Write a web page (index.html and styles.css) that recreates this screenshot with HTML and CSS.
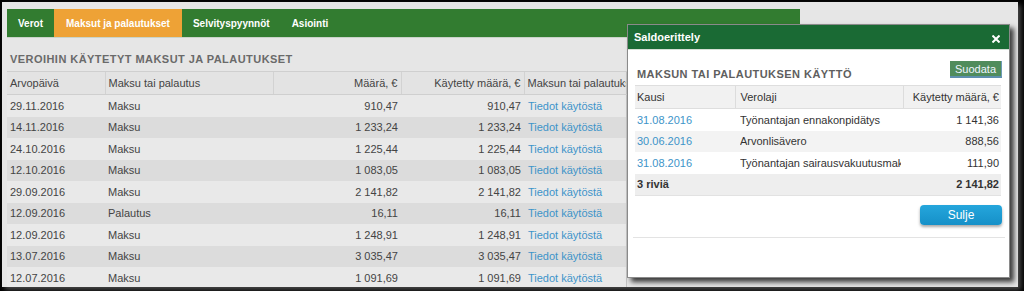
FILE: index.html
```html
<!DOCTYPE html>
<html lang="fi">
<head>
<meta charset="utf-8">
<link rel="stylesheet" href="styles.css">
</head>
<body>
<div class="window">
  <nav class="nav">
    <a class="tab">Verot</a>
    <a class="tab active">Maksut ja palautukset</a>
    <a class="tab">Selvityspyynnöt</a>
    <a class="tab">Asiointi</a>
  </nav>
  <h2 class="title">VEROIHIN KÄYTETYT MAKSUT JA PALAUTUKSET</h2>
  <table class="grid">
    <colgroup><col class="c1"><col class="c2"><col class="c3"><col class="c4"><col class="c5"></colgroup>
    <thead>
      <tr><th>Arvopäivä</th><th>Maksu tai palautus</th><th class="num">Määrä, €</th><th class="num">Käytetty määrä, €</th><th>Maksun tai palautuksen</th></tr>
    </thead>
    <tbody>
      <tr><td>29.11.2016</td><td>Maksu</td><td class="num">910,47</td><td class="num">910,47</td><td><a class="link">Tiedot käytöstä</a></td></tr>
      <tr><td>14.11.2016</td><td>Maksu</td><td class="num">1 233,24</td><td class="num">1 233,24</td><td><a class="link">Tiedot käytöstä</a></td></tr>
      <tr><td>24.10.2016</td><td>Maksu</td><td class="num">1 225,44</td><td class="num">1 225,44</td><td><a class="link">Tiedot käytöstä</a></td></tr>
      <tr><td>12.10.2016</td><td>Maksu</td><td class="num">1 083,05</td><td class="num">1 083,05</td><td><a class="link">Tiedot käytöstä</a></td></tr>
      <tr><td>29.09.2016</td><td>Maksu</td><td class="num">2 141,82</td><td class="num">2 141,82</td><td><a class="link">Tiedot käytöstä</a></td></tr>
      <tr><td>12.09.2016</td><td>Palautus</td><td class="num">16,11</td><td class="num">16,11</td><td><a class="link">Tiedot käytöstä</a></td></tr>
      <tr><td>12.09.2016</td><td>Maksu</td><td class="num">1 248,91</td><td class="num">1 248,91</td><td><a class="link">Tiedot käytöstä</a></td></tr>
      <tr><td>13.07.2016</td><td>Maksu</td><td class="num">3 035,47</td><td class="num">3 035,47</td><td><a class="link">Tiedot käytöstä</a></td></tr>
      <tr><td>12.07.2016</td><td>Maksu</td><td class="num">1 091,69</td><td class="num">1 091,69</td><td><a class="link">Tiedot käytöstä</a></td></tr>
    </tbody>
  </table>

  <div class="modal">
    <div class="modal-head">
      <span class="modal-title">Saldoerittely</span>
      <svg class="close" width="8" height="8" viewBox="0 0 8 8"><path d="M1.2 1.2 L6.8 6.8 M6.8 1.2 L1.2 6.8" stroke="#fff" stroke-width="2" stroke-linecap="square"/></svg>
    </div>
    <div class="modal-body">
      <div class="section-row">
        <h3 class="section-title">MAKSUN TAI PALAUTUKSEN KÄYTTÖ</h3>
        <button class="filter">Suodata</button>
      </div>
      <table class="mgrid">
        <colgroup><col class="m1"><col class="m2"><col class="m3"></colgroup>
        <thead>
          <tr><th>Kausi</th><th>Verolaji</th><th class="num">Käytetty määrä, €</th></tr>
        </thead>
        <tbody>
          <tr><td><a class="link">31.08.2016</a></td><td><div class="clip">Työnantajan ennakonpidätys</div></td><td class="num">1 141,36</td></tr>
          <tr><td><a class="link">30.06.2016</a></td><td><div class="clip">Arvonlisävero</div></td><td class="num">888,56</td></tr>
          <tr><td><a class="link">31.08.2016</a></td><td><div class="clip">Työnantajan sairausvakuutusmaksu</div></td><td class="num">111,90</td></tr>
        </tbody>
        <tfoot>
          <tr><td>3 riviä</td><td></td><td class="num">2 141,82</td></tr>
        </tfoot>
      </table>
      <div class="actions"><button class="close-btn">Sulje</button></div>
      <div class="divider"></div>
    </div>
  </div>
</div>
</body>
</html>
```

FILE: styles.css
```css
html, body {
  margin: 0;
  padding: 0;
}
body {
  background: #000;
  width: 1024px;
  height: 291px;
  overflow: hidden;
  font-family: "Liberation Sans", Arial, sans-serif;
  font-size: 11px;
  color: #333;
}
.window {
  box-sizing: border-box;
  position: relative;
  margin: 2px 0 0 2px;
  width: 1016px;
  height: 285px;
  background: #e6e6e6;
  padding: 7px 0 0 5px;
  overflow: hidden;
  box-shadow: 3px 3px 5px rgba(90, 90, 90, 0.8);
}
.nav {
  display: flex;
  width: 793px;
  height: 28px;
  background: #327c30;
  border-bottom: 1px solid #c9d3c9;
}
.tab {
  display: flex;
  align-items: center;
  padding: 0 11px;
  color: #fff;
  font-weight: bold;
  font-size: 10px;
}
.tab.active {
  background: #eea236;
  padding: 0 12px;
}
.title {
  margin: 14px 0 5px 3px;
  font-size: 11px;
  line-height: 14px;
  letter-spacing: 0.45px;
  color: #6a6a6a;
  font-weight: bold;
}
.grid {
  border-collapse: collapse;
  table-layout: fixed;
  width: 619px;
  border-right: 1px solid #c4c4c4;
}
.c1 { width: 98px; }
.c2 { width: 168px; }
.c3 { width: 128px; }
.c4 { width: 123px; }
.c5 { width: 102px; }
.grid th {
  height: 22px;
  padding: 0 3px;
  font-weight: normal;
  text-align: left;
  color: #444;
  background: #e3e3e3;
  border-top: 1px solid #cfcfcf;
  border-bottom: 1px solid #cfcfcf;
  border-left: 1px solid #d2d2d2;
  white-space: nowrap;
  overflow: hidden;
}
.grid th:first-child { border-left: 0; }
.grid td {
  height: 21.5px;
  padding: 0 3px;
  white-space: nowrap;
  overflow: hidden;
  color: #444;
}
.grid tbody tr:nth-child(odd) td { background: #e9e9e9; }
.grid tbody tr:nth-child(even) td { background: #dcdcdc; }
.grid .num, .mgrid .num { text-align: right; }
.grid td.num { padding-right: 3px; }
.grid td:nth-child(5) { padding-left: 4px; }
.link {
  color: #3d94c9;
}
.modal {
  position: absolute;
  left: 625px;
  top: 22px;
  width: 383px;
  height: 254px;
  background: #fff;
  border: 1px solid #8a8a8a;
  box-sizing: border-box;
  box-shadow: 4px 4px 5px rgba(0, 0, 0, 0.75);
}
.modal-head {
  display: flex;
  align-items: center;
  justify-content: space-between;
  height: 24px;
  padding: 0 9px 0 6px;
  background: #1a6a34;
  border-bottom: 1px solid #d6e0d6;
}
.modal-title {
  color: #fff;
  font-weight: bold;
  font-size: 11px;
}
.close {
  display: block;
  margin-top: 3px;
}
.modal-body {
  padding: 9px 7px 0 7px;
}
.section-row {
  display: flex;
  align-items: center;
  justify-content: space-between;
  height: 26px;
  padding-left: 2px;
}
.section-title {
  margin: 4px 0 0 0;
  font-size: 11px;
  letter-spacing: 0.45px;
  color: #5e5e5e;
  font-weight: bold;
}
.filter {
  font-family: inherit;
  font-size: 11px;
  height: 17px;
  padding: 0 5px;
  margin-top: -5px;
  background: #508c5c;
  color: #eef4ff;
  border: 0;
  border-bottom: 2px solid #5e8fae;
  border-right: 1px solid #6d9bb5;
}
.mgrid {
  border-collapse: collapse;
  table-layout: fixed;
  width: 366px;
}
.m1 { width: 100px; }
.m2 { width: 168px; }
.m3 { width: 98px; }
.mgrid th {
  height: 22px;
  padding: 0 2px;
  font-weight: normal;
  text-align: left;
  color: #333;
  background: #f1f1f1;
  border-top: 1px solid #dedede;
  border-bottom: 1px solid #dedede;
  border-left: 1px solid #dcdcdc;
  white-space: nowrap;
}
.mgrid th:first-child { border-left: 0; }
.mgrid th:nth-child(2) { padding-left: 5px; }
.mgrid td {
  height: 21.5px;
  padding: 0 2px;
  color: #333;
  white-space: nowrap;
  overflow: hidden;
}
.mgrid td:nth-child(2) { padding-left: 5px; }
.clip {
  overflow: hidden;
  white-space: nowrap;
}
.mgrid tbody tr:nth-child(even) td { background: #f3f3f3; }
.mgrid tfoot td {
  height: 21px;
  font-weight: bold;
  background: #eeeeee;
  border-bottom: 1px solid #e2e2e2;
}
.actions {
  display: flex;
  justify-content: flex-end;
  margin-top: 9px;
}
.close-btn {
  font-family: inherit;
  font-size: 12px;
  width: 82px;
  height: 20px;
  border: 0;
  border-radius: 4px;
  color: #fff;
  background: linear-gradient(#25a6dc, #1590c8);
  box-shadow: 0 2px 3px rgba(0, 0, 0, 0.35);
}
.divider {
  margin: 12px -3px 0 -2px;
  border-top: 1px solid #e3e3e3;
}
```
